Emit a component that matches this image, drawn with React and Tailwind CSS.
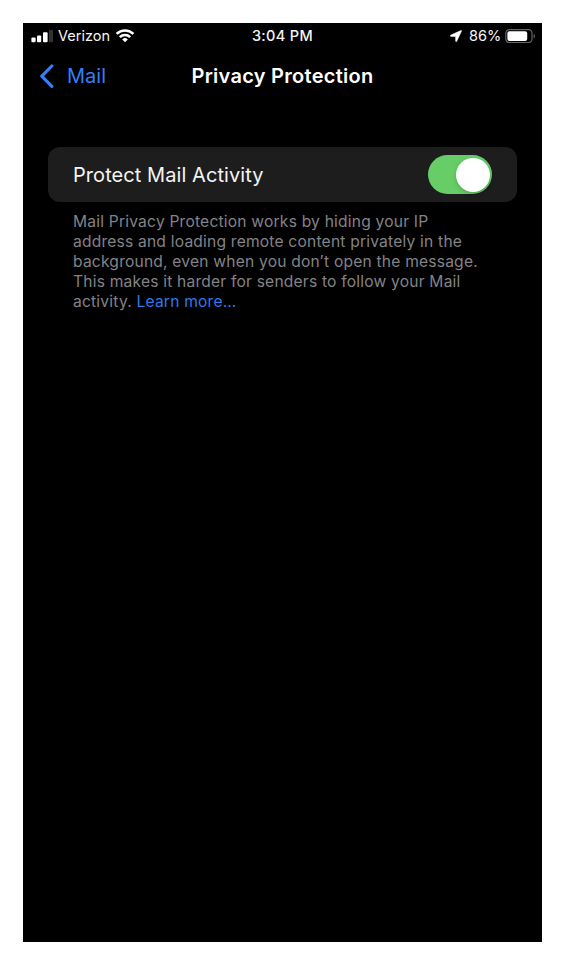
import React, { useState } from 'react';

const SignalIcon = () => (
  <svg width="22" height="16" viewBox="0 0 22 16" fill="#fff">
    <rect x="0.4" y="9.6" width="4.2" height="4.6" rx="1" />
    <rect x="6" y="7.4" width="4.2" height="6.8" rx="1" />
    <rect x="12" y="4.2" width="4.6" height="10" rx="1" />
    <rect x="18" y="2" width="4" height="12.2" rx="1" fill="#333" />
  </svg>
);

const WifiIcon = () => (
  <svg width="20" height="14" viewBox="0 0 20 14" fill="none" stroke="#fff">
    <path d="M1.6 4.9a12 12 0 0 1 16.8 0" strokeWidth="2.6" />
    <path d="M4.8 8.1a7.4 7.4 0 0 1 10.4 0" strokeWidth="2.5" />
    <path d="M10 13.3l-2.8-2.9a4 4 0 0 1 5.6 0z" fill="#fff" stroke="none" />
  </svg>
);

const LocationIcon = () => (
  <svg width="12" height="12" viewBox="0 0 12 12" fill="#fff" stroke="#fff" strokeWidth="0.5">
    <path d="M10.9 0.5 0.8 5.1c-.7.4-.5 1.3.2 1.3h4.3c.2 0 .3.1.3.3v4.2c0 .9 1 1 1.3.2L11.5 1.1c.2-.5-.1-.8-.6-.6z" />
  </svg>
);

const BatteryIcon = () => (
  <svg width="31" height="14" viewBox="0 0 31 14" fill="none">
    <rect x="0.8" y="0.6" width="26.2" height="13" rx="3.6" stroke="#656565" strokeWidth="1.2" />
    <rect x="2.4" y="2.2" width="19.8" height="9.8" rx="2" fill="#fff" />
    <path d="M28.6 5c1.8.6 1.8 3.8 0 4.4z" fill="#656565" />
  </svg>
);

const StatusBar = () => (
  <div className="grid h-[26px] grid-cols-[1fr_auto_1fr] items-center text-[14.5px] leading-none text-[#f4f4f4]">
    <div className="flex items-center pl-2">
      <SignalIcon />
      <span className="ml-[5px] w-[57px]">Verizon</span>
      <WifiIcon />
    </div>
    <div className="font-medium tracking-[0.35px]">3:04 PM</div>
    <div className="flex items-center justify-end pr-[6px]">
      <LocationIcon />
      <span className="ml-[7px] w-[36px]">86%</span>
      <BatteryIcon />
    </div>
  </div>
);

const NavBar = () => (
  <div className="grid h-[54px] grid-cols-[1fr_auto_1fr] items-center text-[20px] leading-none">
    <button className="flex items-center pl-4 text-[#347ff6]">
      <svg width="16" height="25" viewBox="0 0 16 25" fill="none" stroke="currentColor" strokeWidth="3.2" strokeLinecap="round" strokeLinejoin="round">
        <path d="M12.8 2 2.8 12.2l10 10.2" />
      </svg>
      <span className="ml-[12px]">Mail</span>
    </button>
    <h1 className="font-semibold tracking-[0.28px] text-white">Privacy Protection</h1>
  </div>
);

const Toggle = ({ checked, onChange }) => (
  <button
    type="button"
    role="switch"
    aria-checked={checked}
    onClick={onChange}
    className={`flex h-[39px] w-16 items-center rounded-full px-[2.5px] ${checked ? 'justify-end bg-[#67ce67]' : 'justify-start bg-[#39393d]'}`}
  >
    <span className="size-[34px] rounded-full bg-white shadow-[0_2px_5px_rgba(0,0,0,0.2)]" />
  </button>
);

const App = () => {
  const [protect, setProtect] = useState(true);

  return (
    <div className="h-[954px] w-[562px] bg-white pt-[23px] pl-[23px] font-['Inter',sans-serif]">
      <div className="h-[919px] w-[519px] bg-black">
        <StatusBar />
        <NavBar />
        <main className="px-[25px] pt-[44px]">
          <div className="flex h-[55px] items-center justify-between rounded-xl bg-[#1d1d1e] px-[25px]">
            <span className="text-[20px] tracking-[0.07px] text-[#f4f4f4]">Protect Mail Activity</span>
            <Toggle checked={protect} onChange={() => setProtect((prev) => !prev)} />
          </div>
          <p className="pt-[10px] pl-[25px] text-[15.6px] leading-5 tracking-[0.2px] whitespace-nowrap text-[#838387]">
            Mail Privacy Protection works by hiding your IP<br />
            address and loading remote content privately in the<br />
            background, even when you don’t open the message.<br />
            This makes it harder for senders to follow your Mail<br />
            activity. <a className="text-[#3178ea]">Learn more…</a>
          </p>
        </main>
      </div>
    </div>
  );
};

export default App;
